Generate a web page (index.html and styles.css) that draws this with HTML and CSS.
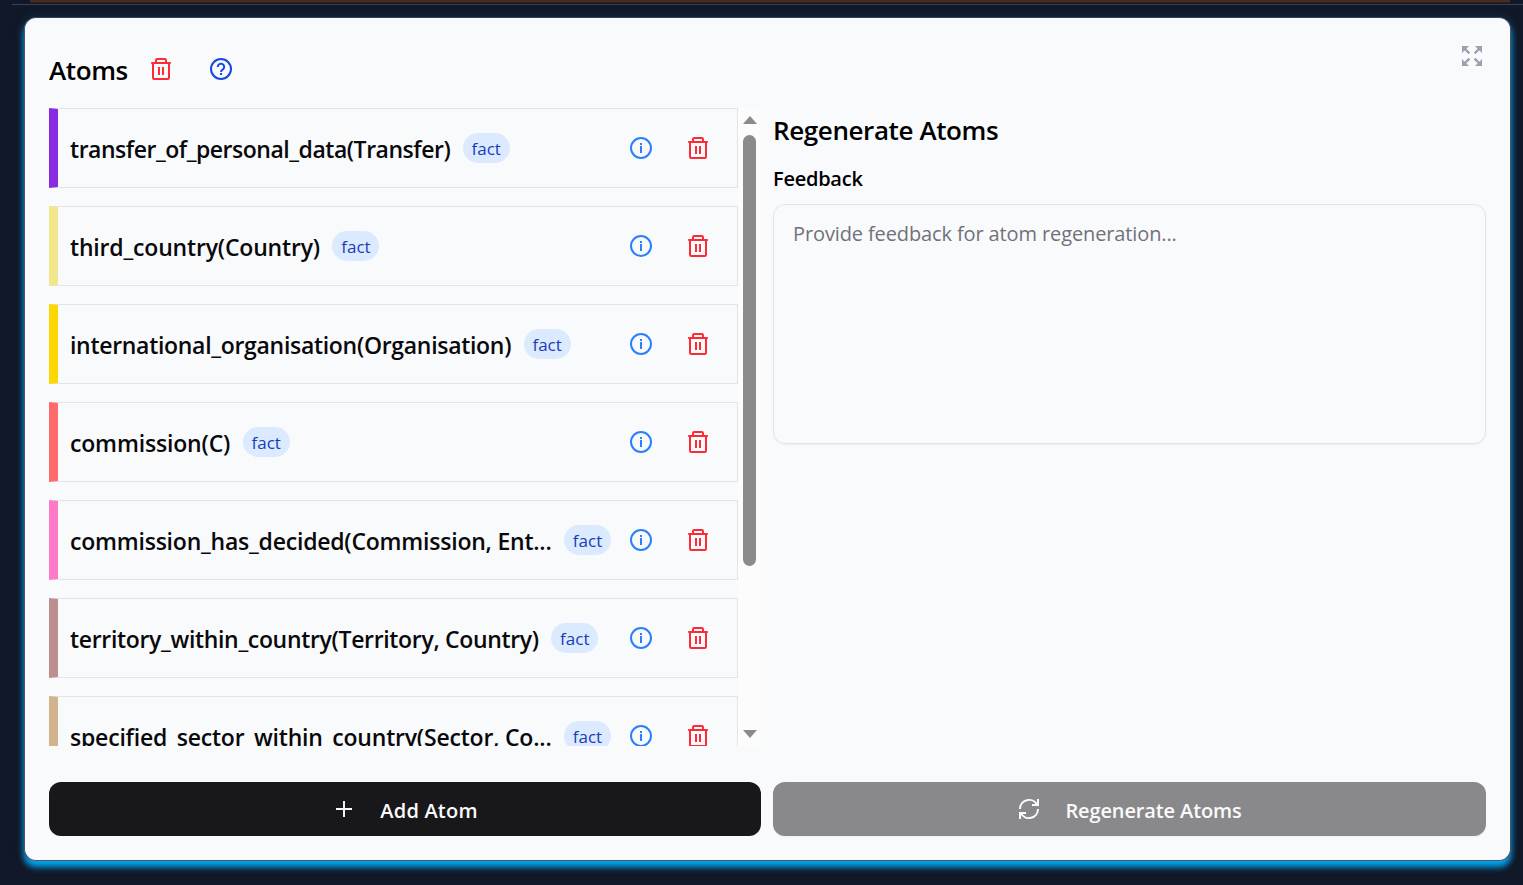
FILE: index.html
```html
<!DOCTYPE html>
<html lang="en">
<head>
<meta charset="utf-8">
<title>Atoms</title>
<link rel="stylesheet" href="styles.css">
</head>
<body>
<svg class="defs" width="0" height="0" aria-hidden="true">
  <symbol id="trash" viewBox="0 0 22 24"><path d="M1.2 6H20.8M6 6V3.2Q6 2 7.2 2H14.8Q16 2 16 3.2V6M3 6V20.8Q3 22 4.2 22H17.8Q19 22 19 20.8V6M9 10V18M13 10V18" /></symbol>
  <symbol id="info" viewBox="0 0 24 24"><circle cx="12" cy="12" r="10"/><path d="M12 10V17M12 7V9"/></symbol>
</svg>
<div class="section-above"></div>
<main class="card">
  <section class="col">
    <header class="head">
      <h2 class="title">Atoms</h2>
      <svg class="icon trash head-trash"><use href="#trash"/></svg>
      <svg class="icon help" viewBox="0 0 24 24"><circle cx="12" cy="12" r="10"/><path d="M8.8 10A3.2 3.2 0 1 1 14.2 12.2Q12 13.4 12 15M12 16V18"/></svg>
    </header>
    <div class="list-wrap">
      <div class="list">
        <div class="atom violet"><span class="name n1">transfer_of_personal_data(Transfer)</span><span class="tag">fact</span><span class="actions"><svg class="icon info"><use href="#info"/></svg><svg class="icon trash"><use href="#trash"/></svg></span></div>
        <div class="atom khaki"><span class="name n2">third_country(Country)</span><span class="tag">fact</span><span class="actions"><svg class="icon info"><use href="#info"/></svg><svg class="icon trash"><use href="#trash"/></svg></span></div>
        <div class="atom gold"><span class="name n3">international_organisation(Organisation)</span><span class="tag">fact</span><span class="actions"><svg class="icon info"><use href="#info"/></svg><svg class="icon trash"><use href="#trash"/></svg></span></div>
        <div class="atom coral"><span class="name n4">commission(C)</span><span class="tag">fact</span><span class="actions"><svg class="icon info"><use href="#info"/></svg><svg class="icon trash"><use href="#trash"/></svg></span></div>
        <div class="atom pink"><span class="name n5">commission_has_decided(Commission, Ent...</span><span class="tag">fact</span><span class="actions"><svg class="icon info"><use href="#info"/></svg><svg class="icon trash"><use href="#trash"/></svg></span></div>
        <div class="atom rosy"><span class="name n6">territory_within_country(Territory, Country)</span><span class="tag">fact</span><span class="actions"><svg class="icon info"><use href="#info"/></svg><svg class="icon trash"><use href="#trash"/></svg></span></div>
        <div class="atom tan"><span class="name n7">specified_sector_within_country(Sector, Co...</span><span class="tag">fact</span><span class="actions"><svg class="icon info"><use href="#info"/></svg><svg class="icon trash"><use href="#trash"/></svg></span></div>
      </div>
      <div class="scrollbar"><i class="arrow up"></i><i class="thumb"></i><i class="arrow down"></i></div>
    </div>
    <button class="btn add"><svg class="plus" viewBox="0 0 16 16"><path d="M8 0V16M0 8H16"/></svg><span class="add-label">Add Atom</span></button>
  </section>
  <section class="col right">
    <div class="expand-row"><svg class="expand" viewBox="0 0 22 22"><path class="heads" d="M1 1H8L1 8ZM21 1H14L21 8ZM1 21V14L8 21ZM21 21H14L21 14Z"/><path class="shafts" d="M3 3L8.4 8.4M19 3L13.6 8.4M3 19L8.4 13.6M19 19L13.6 13.6"/></svg></div>
    <h2 class="title regen">Regenerate Atoms</h2>
    <label class="label">Feedback</label>
    <div class="field"><span class="placeholder">Provide feedback for atom regeneration...</span></div>
    <button class="btn muted"><svg class="refresh" viewBox="0 0 22 22"><path d="M2 11A9 9 0 0 1 19 6.8M20 1V7H14M20 11A9 9 0 0 1 3 15.2M2 21V15H8"/></svg><span class="regen-label">Regenerate Atoms</span></button>
  </section>
</main>
</body>
</html>
```
FILE: styles.css
```css
* { box-sizing: border-box; }
html, body { margin: 0; height: 100%; overflow: hidden; }
body { background: #111827; font-family: "Open Sans", "Noto Sans", sans-serif; color: #09090b; }
.defs { display: block; height: 0; }
.section-above { height: 5px; margin-left: 12px; border-bottom: 1px solid #364153; background: linear-gradient(#482a20 0 2px, transparent 3px) 18px 0 / 1480px 5px no-repeat; }
.card { margin: 12px 12px 0 24px; width: 1487px; height: 844px; border: 1px solid #4a5565; border-top-color: #364153; border-radius: 12px; background: #f9fafc; box-shadow: 0 6px 6px #00a6f4, 0 0 12px #00a6f430; padding: 0 24px; display: grid; grid-template-columns: 712px 713px; column-gap: 12px; }
.col { display: flex; flex-direction: column; min-width: 0; }
.head { height: 90px; padding-top: 14px; display: flex; align-items: center; }
.title { margin: 0; font-size: 26px; line-height: 36px; font-weight: 600; white-space: nowrap; letter-spacing: -0.4px; color: #000; }
.icon { fill: none; stroke: currentColor; stroke-width: 2; flex: none; }
.trash { width: 22px; height: 24px; color: #fb2c36; }
.head-trash { margin: 0 37px 2px 22px; }
.info { width: 24px; height: 24px; color: #2b7fff; }
.help { width: 24px; height: 24px; margin-bottom: 2px; color: #1447e6; }
.list-wrap { display: flex; height: 638px; }
.list { width: 689px; height: 638px; overflow: hidden; display: flex; flex-direction: column; gap: 18px; }
.atom { flex: 0 0 80px; border: 1px solid #e4e4e7; border-left-width: 9px; display: flex; align-items: center; padding: 0 28px 0 12px; }
.violet { border-left-color: #8a2be2; }
.khaki { border-left-color: #f0e68c; }
.gold { border-left-color: #ffd700; }
.coral { border-left-color: #ff6b6b; }
.pink { border-left-color: #ff7ac6; }
.rosy { border-left-color: #bc8f8f; }
.tan { border-left-color: #d2b48c; }
.name { font-size: 23px; font-weight: 600; line-height: 36px; white-space: nowrap; padding-top: 1px; }
.n1 { letter-spacing: -0.47px; }
.n2 { letter-spacing: -0.18px; }
.n3 { letter-spacing: -0.3px; }
.n4 { letter-spacing: -0.17px; }
.n5 { letter-spacing: -0.22px; }
.n6 { letter-spacing: -0.33px; }
.n7 { letter-spacing: -0.2px; }
.tag { flex: none; width: 47px; height: 30px; margin-left: 12.5px; border-radius: 15px; background: #dbeafe; color: #193cb8; font-size: 17px; line-height: 31px; text-align: center; }
.actions { margin-left: auto; display: flex; gap: 34px; }
.scrollbar { width: 23px; background: #fcfcfc; display: flex; flex-direction: column; align-items: center; padding: 8px 0; }
.arrow { border: 7.5px solid transparent; width: 0; height: 0; }
.up { border-bottom: 8px solid #8b8b8b; border-top: 0; }
.down { border-top: 8px solid #8b8b8b; border-bottom: 0; margin-top: auto; }
.thumb { width: 13px; height: 431px; margin-top: 11px; border-radius: 7px; background: #8b8b8b; }
.btn { height: 54px; border: 0; border-radius: 12px; font: 600 20px/28px "Open Sans", "Noto Sans", sans-serif; display: flex; align-items: center; justify-content: center; padding: 0; white-space: nowrap; }
.add { margin-top: 36px; background: #18181b; color: #fafafa; padding-left: 4px; }
.plus { width: 16px; height: 16px; stroke: #fafafa; stroke-width: 1.9; }
.add-label { margin-left: 28px; padding-top: 3px; letter-spacing: 0.2px; }
.expand-row { height: 90px; display: flex; justify-content: flex-end; padding: 27px 3px 0 0; }
.expand { width: 22px; height: 22px; fill: #99a1af; }
.shafts { stroke: #99a1af; stroke-width: 2.3; }
.regen { margin-top: 4px; }
.label { margin: 17px 0 0; font-size: 20px; line-height: 28px; font-weight: 600; letter-spacing: -0.25px; color: #000; }
.field { margin-top: 11px; height: 240px; border: 1px solid #e4e4e7; border-radius: 12px; padding: 15px 19px; font-size: 20px; line-height: 28px; color: #71717a; letter-spacing: -0.12px; box-shadow: 0 1px 2px #0000000d; }
.muted { margin-top: auto; margin-bottom: 24px; background: #89898b; color: #fafafa; padding-left: 1px; box-shadow: 0 1px 2px #0000000d; }
.refresh { width: 22px; height: 22px; fill: none; stroke: #fafafa; stroke-width: 2; }
.regen-label { margin-left: 25px; padding-top: 3px; letter-spacing: -0.12px; }
```
